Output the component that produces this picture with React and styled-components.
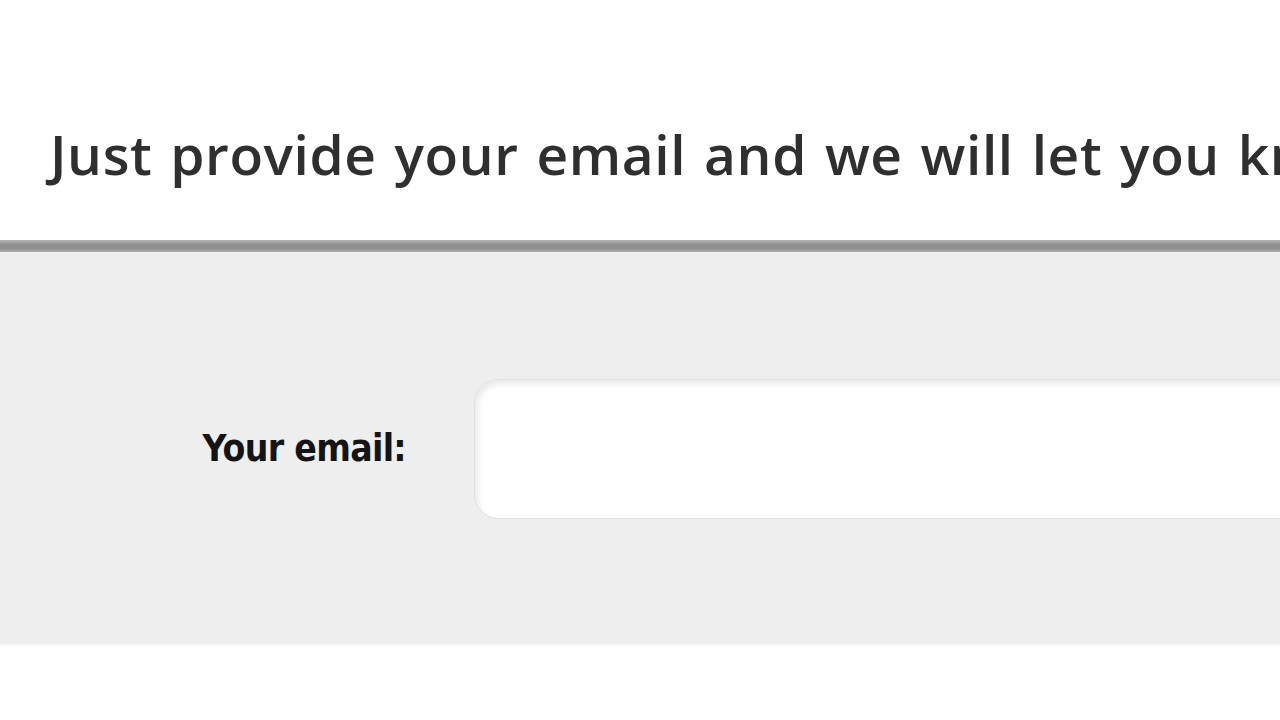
import styled, { createGlobalStyle } from "styled-components";

const Global = createGlobalStyle`
  html, body {
    margin: 0;
    padding: 0;
    background: #fff;
    overflow: hidden;
  }
  body {
    font-family: "Open Sans", "Liberation Sans", sans-serif;
  }
`;

const Page = styled.div`
  width: 1280px;
  height: 720px;
  overflow: hidden;
`;

const Intro = styled.header`
  height: 240px;
  display: flex;
  align-items: center;
  padding-left: 50px;
  padding-top: 66px;
  box-sizing: border-box;
  white-space: nowrap;
`;

const Heading = styled.h1`
  margin: 0;
  font-size: 55px;
  font-weight: 600;
  color: #2f2f2f;
  letter-spacing: 0.6px;
  word-spacing: 3px;
`;

const Band = styled.section`
  height: 390px;
  background: #eeeeee;
  border-top: 12px solid #999;
  box-shadow: 0 2px 2px rgba(0, 0, 0, 0.04);
  position: relative;
  display: flex;
  align-items: center;
  padding-top: 2px;
  box-sizing: content-box;

  &::before {
    content: "";
    position: absolute;
    left: 0;
    right: 0;
    top: -12px;
    height: 12px;
    background: linear-gradient(#b5b5b5 0%, #8e8e8e 40%, #8e8e8e 70%, #b0b0b0 100%);
  }
`;

const Row = styled.div`
  display: flex;
  align-items: center;
  gap: 68px;
  width: 100%;
`;

const Label = styled.label`
  width: 406px;
  text-align: right;
  font-family: "DejaVu Sans Condensed", "DejaVu Sans", sans-serif;
  font-stretch: condensed;
  font-size: 37px;
  font-weight: 700;
  letter-spacing: -0.7px;
  color: #141414;
  flex-shrink: 0;
  padding-bottom: 2px;
`;

const Input = styled.input`
  flex-shrink: 0;
  width: 900px;
  height: 140px;
  box-sizing: border-box;
  border: 1px solid #e0e0e0;
  border-radius: 24px;
  background: #fff;
  box-shadow: inset 3px 4px 6px rgba(0, 0, 0, 0.09);
  outline: none;
  font-family: inherit;
  font-size: 30px;
  padding: 0 24px;
`;

export default function App() {
  return (
    <Page>
      <Global />
      <Intro>
        <Heading>Just provide your email and we will let you know</Heading>
      </Intro>
      <Band>
        <Row>
          <Label htmlFor="email">Your email:</Label>
          <Input id="email" type="email" />
        </Row>
      </Band>
    </Page>
  );
}
